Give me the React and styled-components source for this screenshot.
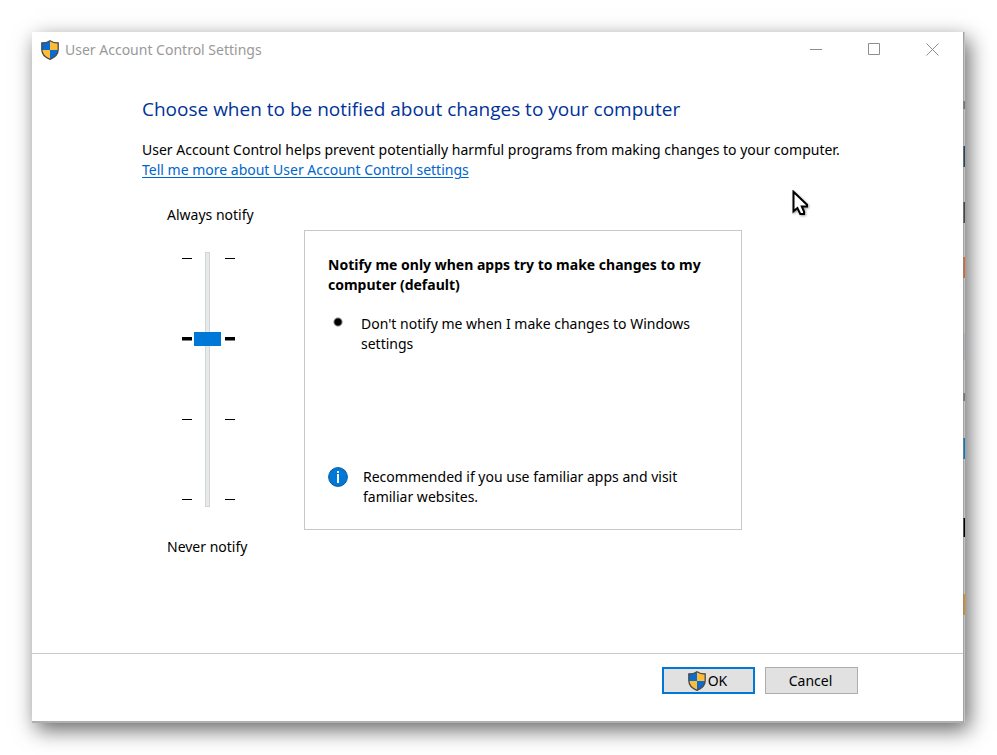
import React, { useState } from 'react';

import styled, { createGlobalStyle } from 'styled-components';

const LEVELS = [3, 2, 1, 0];

function Shield() {
    return (
        <ShieldSvg viewBox="0 0 18 20" aria-hidden="true">
            <path d="M9 .7 C7 2.1 4 3 .8 3 V9.5 C.8 14 4 17.3 9 19.3Z" fill="#0a6cce" />
            <path d="M9 .7 C11 2.1 14 3 17.2 3 V9.5 C17.2 14 14 17.3 9 19.3Z" fill="#ffbd35" />
            <path d="M.8 10 H9 V19.3 C4 17.3 1 14 .8 10Z" fill="#ffbd35" />
            <path d="M17.2 10 H9 V19.3 C14 17.3 17 14 17.2 10Z" fill="#0a6cce" />
            <path
                d="M9 .7 C7 2.1 4 3 .8 3 V9.5 C.8 14 4 17.3 9 19.3 C14 17.3 17.2 14 17.2 9.5 V3 C14 3 11 2.1 9 .7Z"
                fill="none"
                stroke="#4a4a4a"
                strokeWidth="1.3"
            />
        </ShieldSvg>
    );
}

export default function App() {

    const [ level, setLevel ] = useState(2);

    return (
    <>
        <GlobalStyle />
        <Desktop>
            <Window>
                <Dialog>
                    <TitleBar>
                        <Shield />
                        <Caption>User Account Control Settings</Caption>
                        <WindowButton type="button" aria-label="Minimize">
                            <svg width="13" height="13"><path d="M0 6.5H12" /></svg>
                        </WindowButton>
                        <WindowButton type="button" aria-label="Maximize">
                            <svg width="13" height="13"><path d="M.5 .5H11.5V11.5H.5Z" /></svg>
                        </WindowButton>
                        <WindowButton type="button" aria-label="Close">
                            <svg width="13" height="13"><path d="M.5 .5L12.5 12.5M12.5 .5L.5 12.5" /></svg>
                        </WindowButton>
                    </TitleBar>

                    <Content>
                        <Heading>Choose when to be notified about changes to your computer</Heading>
                        <Intro>User Account Control helps prevent potentially harmful programs from making changes to your computer.</Intro>
                        <HelpLink href="#help">Tell me more about User Account Control settings</HelpLink>

                        <Settings>
                            <SliderColumn>
                                <SliderLabel htmlFor="level">Always notify</SliderLabel>
                                <SliderRow>
                                    <Ticks>
                                        {LEVELS.map(n => <Tick key={n} $current={n === level} />)}
                                    </Ticks>
                                    <Slider
                                        id="level"
                                        type="range"
                                        min="0"
                                        max="3"
                                        value={level}
                                        onChange={e => setLevel(Number(e.target.value))}
                                    />
                                    <Ticks>
                                        {LEVELS.map(n => <Tick key={n} $current={n === level} />)}
                                    </Ticks>
                                </SliderRow>
                                <SliderLabel htmlFor="level">Never notify</SliderLabel>
                            </SliderColumn>

                            <Panel>
                                <PanelTitle>Notify me only when apps try to make changes to my computer (default)</PanelTitle>
                                <Details>
                                    <Detail>Don't notify me when I make changes to Windows settings</Detail>
                                </Details>
                                <Advice>
                                    <svg width="20" height="20" aria-hidden="true">
                                        <circle cx="10" cy="10" r="9.4" fill="#0078d7" stroke="#0b5a9c" />
                                        <path d="M9 4H11V6H9ZM9 7H11V16H9Z" fill="#fff" />
                                    </svg>
                                    <AdviceText>Recommended if you use familiar apps and visit familiar websites.</AdviceText>
                                </Advice>
                            </Panel>
                        </Settings>
                    </Content>

                    <Footer>
                        <Button type="button" $primary><Shield />OK</Button>
                        <Button type="button">Cancel</Button>
                    </Footer>
                </Dialog>
                <Edge />
            </Window>

            <Pointer viewBox="0 0 17 26" aria-hidden="true">
                <path d="M1.5 1.8V21.3L5.4 18L8.3 24H12V21.5L9.8 16.5H15V14.8Z" />
            </Pointer>
        </Desktop>
    </>
    );
}

const GlobalStyle = createGlobalStyle`
  * {
    box-sizing: border-box;
  }

  body {
    margin: 0;
    background: #FFF;
    color: #000;
    font-family: "Noto Sans", "Open Sans", sans-serif;
    font-size: 14px;
    line-height: 20px;
  }
`;

const Desktop = styled.div`
  position: relative;
  min-height: 100vh;
  padding: 32px;
  display: flex;
`;

const Window = styled.div`
  flex: 1;
  display: flex;
  background: #FFF;
  box-shadow: 4px 7px 20px rgba(0, 0, 0, 0.6);
`;

const Dialog = styled.main`
  flex: 1;
  display: flex;
  flex-direction: column;
  border-bottom: 2px solid #AFAFAF;
`;

/* what the window behind still shows past the right border */
const Edge = styled.div`
  width: 2px;
  border-left: 1px solid rgba(140, 140, 140, 0.6);
  background: linear-gradient(
    #C4C4C4 69px, #77757A 69px 77px,
    #C4C4C4 77px 114px, #2A4468 114px 135px,
    #C4C4C4 135px 170px, #4A4646 170px 191px,
    #C4C4C4 191px 225px, #DC6238 225px 246px,
    #C4C4C4 246px 301px, #B4B4BC 301px 328px,
    #C4C4C4 328px 361px, #77757A 361px 369px,
    #C4C4C4 369px 406px, #0F7AB8 406px 427px,
    #C4C4C4 427px 486px, #000 486px 505px,
    #C4C4C4 505px 562px, #DA8C24 562px 583px,
    #C4C4C4 583px
  ) border-box;
`;

const TitleBar = styled.header`
  height: 35px;
  padding: 0 2px 0 9px;
  display: flex;
  align-items: center;
`;

const ShieldSvg = styled.svg`
  width: 18px;
  height: 20px;
`;

const Caption = styled.span`
  flex: 1;
  margin-left: 6px;
  color: #999;
`;

const WindowButton = styled.button`
  width: 58px;
  height: 32px;
  border: none;
  padding: 0;
  background: none;
  display: flex;
  justify-content: center;
  align-items: center;

  & path {
    fill: none;
    stroke: #8E8E8E;
  }
`;

const Content = styled.section`
  flex: 1;
  padding: 28px 110px 24px;
`;

const Heading = styled.h1`
  margin: 0 0 17px;
  color: #003399;
  font-family: "Open Sans", "Noto Sans", sans-serif;
  font-size: 19px;
  font-weight: normal;
  line-height: 28px;
`;

const Intro = styled.p`
  margin: 0;
`;

const HelpLink = styled.a`
  color: #0066CC;
  text-underline-offset: 2px;
`;

const Settings = styled.div`
  margin-top: 25px;
  padding-left: 25px;
  display: flex;
`;

const SliderColumn = styled.div`
  width: 137px;
  display: flex;
  flex-direction: column;
`;

const SliderLabel = styled.label`
  white-space: nowrap;
`;

const SliderRow = styled.div`
  height: 255px;
  margin: 27px 0 30px 15px;
  display: flex;
`;

const Ticks = styled.div`
  width: 10px;
  padding: 5px 0 6px;
  display: flex;
  flex-direction: column;
  justify-content: space-between;
`;

const Tick = styled.span`
  height: 3px;
  border: solid #000;
  border-width: ${props => props.$current ? '3px 0 0' : '0'};
  background: linear-gradient(#000, #000) center / 100% 1px no-repeat;
`;

const Slider = styled.input`
  appearance: none;
  writing-mode: vertical-lr;
  direction: rtl;
  width: 27px;
  height: 255px;
  margin: 0 4px 0 2px;
  background: linear-gradient(#E7EAEA, #E7EAEA) center / 3px 253px no-repeat,
    linear-gradient(#D2D5D5, #D2D5D5) center / 5px 255px no-repeat;

  &::-webkit-slider-thumb {
    appearance: none;
    width: 27px;
    height: 14px;
    border: none;
    border-radius: 0;
    background: #0078D7;
  }
`;

const Panel = styled.div`
  flex: 1;
  max-width: 438px;
  height: 300px;
  margin-top: 25px;
  border: 1px solid #C8C8C8;
  padding: 24px 23px 22px;
  display: flex;
  flex-direction: column;
`;

const PanelTitle = styled.h2`
  margin: 0;
  font-size: 14px;
  font-weight: bold;
`;

const Details = styled.ul`
  margin: 19px 0 0;
  padding: 0;
  list-style: none;
`;

const Detail = styled.li`
  padding-left: 33px;
  background: radial-gradient(circle at 10px 8px, #000 3px, transparent 5px);
`;

const Advice = styled.div`
  margin-top: auto;
  display: flex;
  align-items: flex-start;
  gap: 15px;

  & svg {
    flex: none;
  }
`;

const AdviceText = styled.p`
  margin: 0;
  max-width: 340px;
`;

const Footer = styled.footer`
  height: 68px;
  border-top: 1px solid #C8C8C8;
  padding: 13px 105px 0;
  display: flex;
  justify-content: flex-end;
  gap: 10px;
`;

const Button = styled.button`
  width: 93px;
  height: 27px;
  border: ${props => props.$primary ? '2px solid #0078D7' : '1px solid #ADADAD'};
  padding: 0 2px 0 0;
  background: #E1E1E1;
  color: #000;
  font: inherit;
  display: flex;
  justify-content: center;
  align-items: center;
  gap: 2px;
`;

const Pointer = styled.svg`
  position: absolute;
  left: 792px;
  top: 190px;
  width: 17px;
  height: 26px;
  fill: #FFF;
  stroke: #000;
  stroke-width: 2;
  filter: drop-shadow(1px 1px 1px rgba(0, 0, 0, 0.4));
`;
